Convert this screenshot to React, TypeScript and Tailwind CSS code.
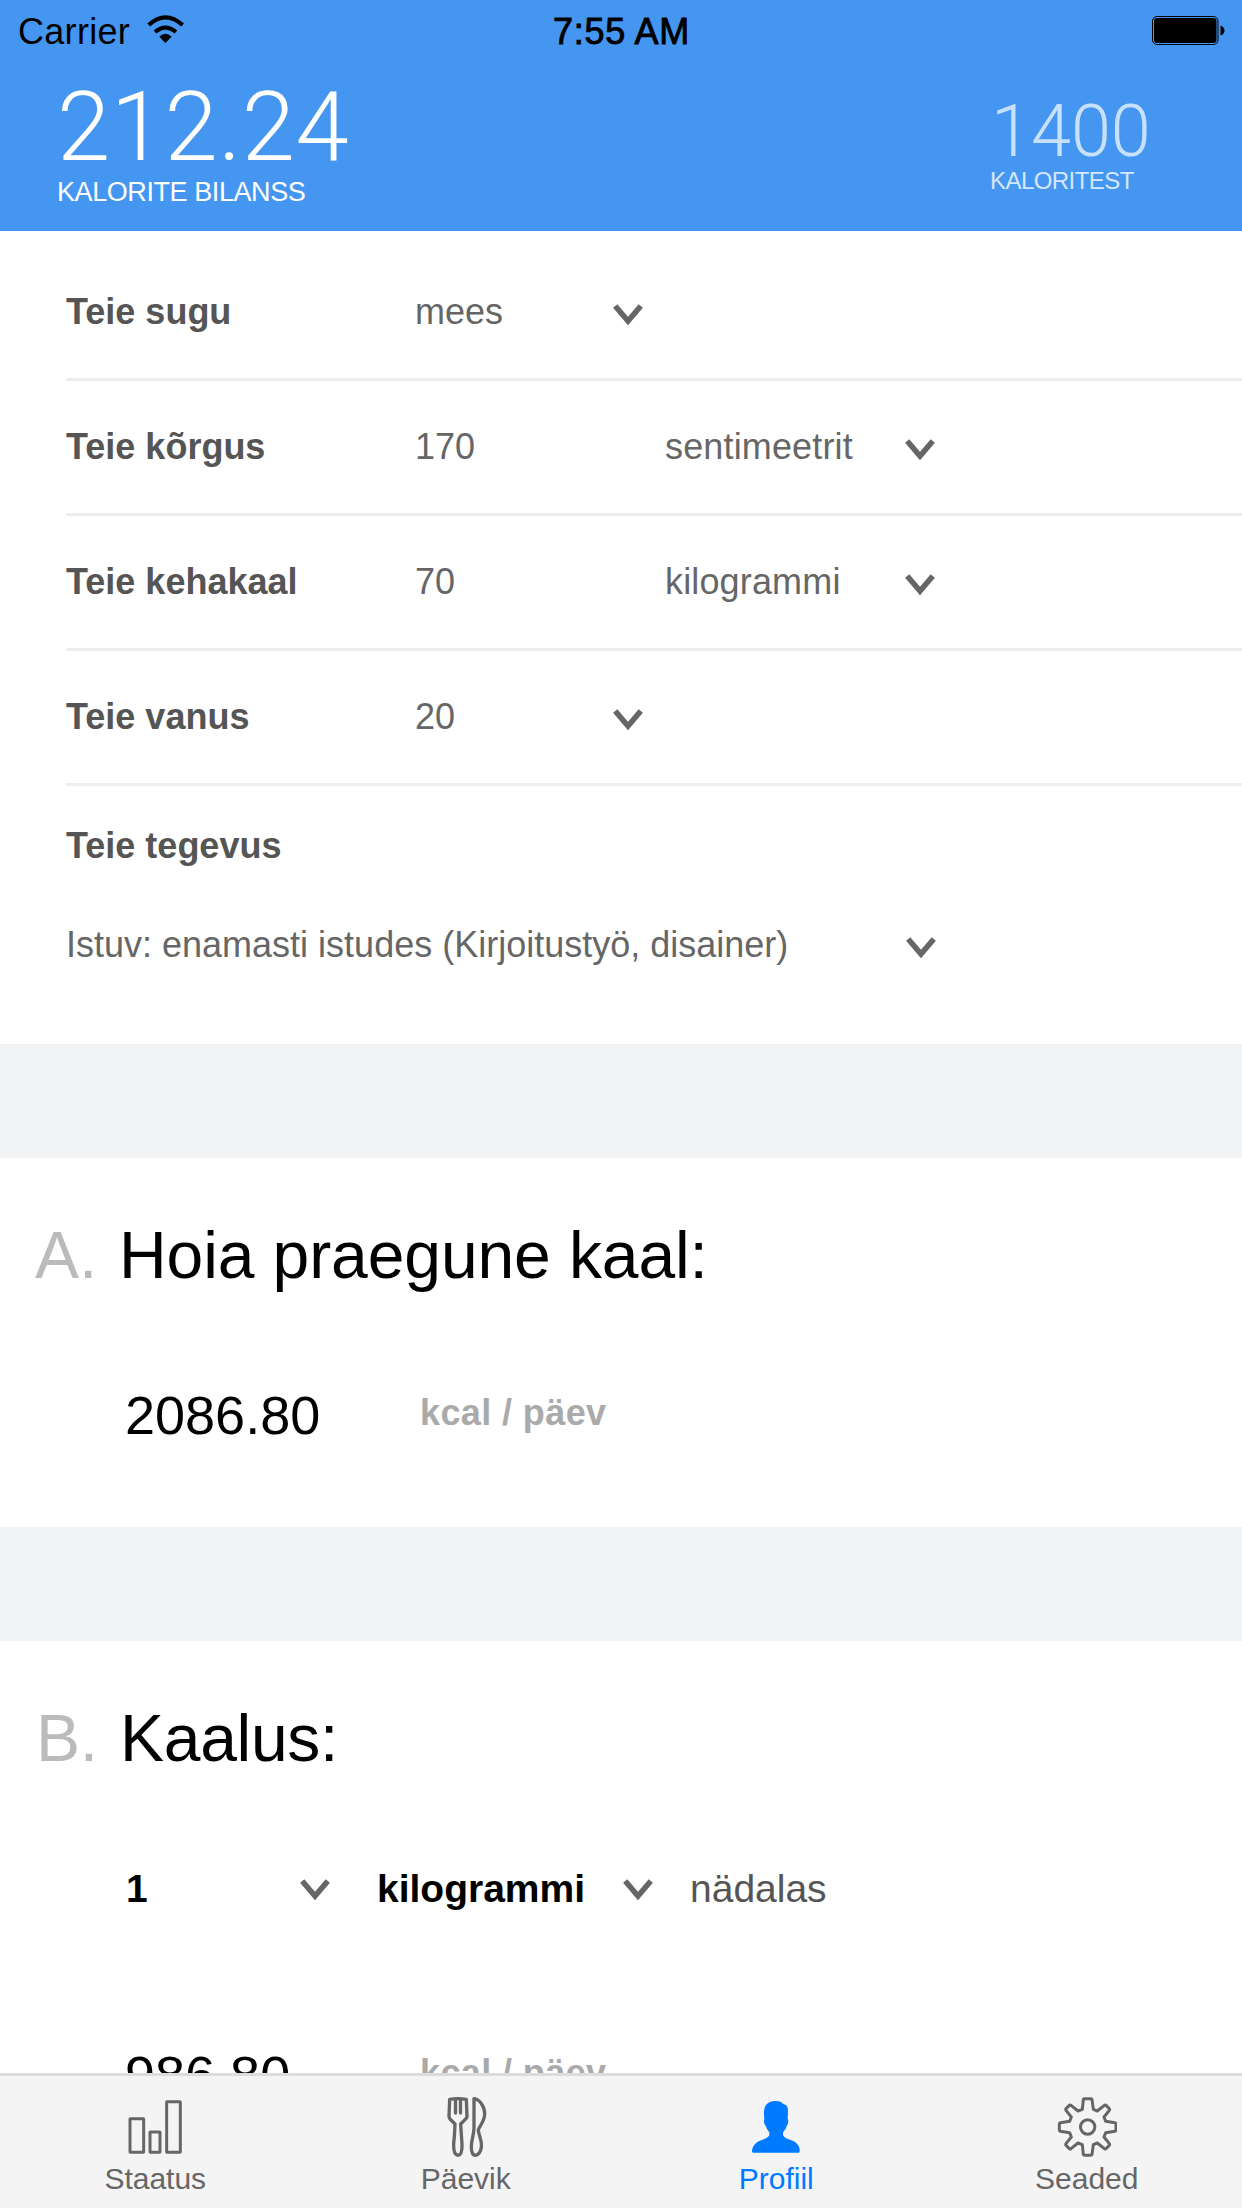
import type { ReactNode } from "react";

function Chevron({ className = "" }: { className?: string }) {
  return (
    <svg viewBox="0 0 30 21" className={`h-[21px] w-[30px] shrink-0 ${className}`} fill="none">
      <path d="M2.2 2 L15 17 L27.8 2" stroke="#666" strokeWidth="5.6" />
    </svg>
  );
}

function StatusBar() {
  return (
    <div className="grid h-[63px] grid-cols-3 items-center pl-[18px] pr-[17px] text-[36px] leading-[40px] text-black">
      <div className="flex items-center">
        <span className="tracking-[0.3px]">Carrier</span>
        <svg viewBox="441 45 114 87" className="-mt-1 ml-[17px] h-[29px] w-[38px]">
          <path d="M478 110 Q496 93 515 110 L496 129 Z" />
          <path d="M465 96 Q496 70 528 96" fill="none" stroke="#000" strokeWidth="12" />
          <path d="M446 75 Q496 29 548 75" fill="none" stroke="#000" strokeWidth="12" />
        </svg>
      </div>
      <span className="text-center tracking-[0.7px] [-webkit-text-stroke:0.9px_black]">7:55 AM</span>
      <svg viewBox="0 0 73 29" className="-mt-0.5 h-[29px] w-[73px] justify-self-end">
        <rect x="0.5" y="0.5" width="65.5" height="28" rx="4.5" fill="none" stroke="#000" />
        <rect x="2" y="2" width="62.5" height="25" rx="3" />
        <path d="M68.5 9.5 Q72.5 11 72.5 14.5 Q72.5 18 68.5 19.5 Z" />
      </svg>
    </div>
  );
}

function Header() {
  return (
    <header className="h-[231px] shrink-0 bg-[#4596f1]">
      <StatusBar />
      <div className="flex justify-between pl-[57px] text-white">
        <div className="pt-[16px]">
          <div className="font-['Roboto'] text-[96px] font-light leading-[96px] tracking-[0.5px]">212.24</div>
          <div className="mt-[2px] text-[27px] leading-[30px] tracking-[-0.42px]">KALORITE BILANSS</div>
        </div>
        <div className="w-[252px] pt-[34px]">
          <div className="pl-[1px] font-['Roboto'] text-[72px] font-light leading-[70px] text-[#c7e0fb]">1400</div>
          <div className="text-[24px] leading-[28px] tracking-[-0.55px] text-[#d5e7fc]">KALORITEST</div>
        </div>
      </div>
    </header>
  );
}

type RowProps = { label: string; value: string; unit?: string; className?: string };

function Row({ label, value, unit, className = "h-[135px]" }: RowProps) {
  return (
    <div className={`ml-[66px] flex items-center border-b-[3px] border-[#eee] ${className}`}>
      <div className="w-[349px] font-bold text-[#555]">{label}</div>
      {unit ? (
        <>
          <div className="w-[250px]">{value}</div>
          <div className="w-[240px] tracking-[0.15px]">{unit}</div>
        </>
      ) : (
        <div className="w-[198px]">{value}</div>
      )}
      <Chevron className="mt-1" />
    </div>
  );
}

function Result({ value }: { value: string }) {
  return (
    <div className="flex pl-[125px]">
      <div className="w-[295px] text-[54px] leading-[60px] text-black">{value}</div>
      <div className="mt-[8px] font-bold tracking-[0.4px] text-[#aaa]">kcal / päev</div>
    </div>
  );
}

function Heading({ mark, className, children }: { mark: string; className: string; children: ReactNode }) {
  return (
    <h2 className={`flex text-[66px] leading-[72px] text-black ${className}`}>
      <span className="w-[84px] text-[#bbb]">{mark}</span>
      <span>{children}</span>
    </h2>
  );
}

function Band() {
  return <div className="h-[114px] bg-[#f2f3f5]" />;
}

function Tab({ label, viewBox, active, children }: { label: string; viewBox: string; active?: boolean; children: ReactNode }) {
  return (
    <div className={`flex flex-1 flex-col items-center pt-[21px] ${active ? "text-[#007aff]" : "text-[#666]"}`}>
      <svg viewBox={viewBox} className="h-[60px] w-[60px]" fill="none" stroke="currentColor" strokeWidth="9" strokeLinejoin="round" strokeLinecap="round">
        {children}
      </svg>
      <span className="mt-[5px] text-[30px] leading-[34px]">{label}</span>
    </div>
  );
}

function TabBar() {
  return (
    <nav className="flex h-[135px] shrink-0 border-t-[3px] border-[#dcdcdc] bg-[#f4f4f4]">
      <Tab label="Staatus" viewBox="136 231 180 180">
        <rect x="151" y="296" width="41" height="101" rx="1" />
        <rect x="211" y="336" width="30" height="61" rx="1" />
        <rect x="261" y="245" width="41" height="152" rx="1" />
      </Tab>
      <Tab label="Päevik" viewBox="167 231 180 180">
        <g strokeWidth="10">
          <path d="M208 238 Q232 234 258 238 L260 289 Q260 293 257 296 L241 312 Q243 345 245 372 Q246 405 233 406 Q219 405 220 372 Q223 345 224 312 L209 297 Q206 294 206 289 Z" />
          <path d="M225.5 239 V279 M240.5 239 V279" />
          <path d="M281 236 V325 C280 348 273 360 273 380 Q273 406 286 406 Q300 403 303 382 C306 360 295 348 294 330 C294 322 313 306 313 281 C313 259 298 238 281 236 Z" />
        </g>
      </Tab>
      <Tab label="Profiil" viewBox="139 231 180 180" active>
        <path
          stroke="none"
          fill="currentColor"
          d="M229 243 C240 243 247 247 250 252 C257 253 262 256 264 264 C266 275 264 288 264 296 C268 300 265 314 261 318 C259 326 254 332 250 337 V346 C255 358 276 358 287 367 C297 375 301 384 300 394 Q300 398 297 398 H161 Q157 398 157 394 C157 384 162 375 172 367 C183 358 204 358 209 346 V337 C205 332 200 326 199 318 C193 314 192 302 194 296 C193 288 192 278 194 267 C197 251 211 243 229 243 Z"
        />
      </Tab>
      <Tab label="Seaded" viewBox="170 231 180 180">
        <circle cx="262" cy="321" r="21.5" />
        <path d="M249 238 Q250 236 253 236 H271 Q274 236 275 238 L279 268 L291 273 L312 256 Q315 254 318 257 L326 265 Q329 268 327 271 L311 291 L316 304 L344 308 Q347 309 347 312 V330 Q347 333 344 334 L316 338 L311 351 L327 371 Q329 374 326 377 L318 385 Q315 388 312 386 L291 369 L279 374 L275 404 Q274 406 271 406 H253 Q250 406 249 404 L246 374 L233 369 L212 386 Q209 388 206 385 L198 377 Q195 374 197 371 L213 351 L208 338 L180 334 Q177 333 177 330 V312 Q177 309 180 308 L208 304 L213 291 L197 271 Q195 268 198 265 L206 257 Q209 254 212 256 L233 273 L246 268 Z" />
      </Tab>
    </nav>
  );
}

export default function App() {
  return (
    <div className="flex h-[2208px] w-[1242px] flex-col overflow-hidden bg-white font-['Liberation_Sans',Arial,sans-serif]">
      <Header />
      <main className="min-h-0 flex-1 overflow-hidden text-[36px] leading-[40px] text-[#666]">
        <Row label="Teie sugu" value="mees" className="h-[150px] pt-[15px]" />
        <Row label="Teie kõrgus" value="170" unit="sentimeetrit" />
        <Row label="Teie kehakaal" value="70" unit="kilogrammi" />
        <Row label="Teie vanus" value="20" />
        <section className="h-[258px] pl-[66px] pt-[40px]">
          <div className="font-bold text-[#555]">Teie tegevus</div>
          <div className="mt-[59px] flex items-center">
            <div className="w-[840px]">Istuv: enamasti istudes (Kirjoitustyö, disainer)</div>
            <Chevron className="mt-1" />
          </div>
        </section>
        <Band />
        <section className="h-[369px] pt-[61px]">
          <Heading mark="A." className="pl-[35px] tracking-[-0.1px]">
            Hoia praegune kaal:
          </Heading>
          <div className="pt-[94px]">
            <Result value="2086.80" />
          </div>
        </section>
        <Band />
        <section className="pt-[61px]">
          <Heading mark="B." className="pl-[36px] tracking-[-0.3px]">
            Kaalus:
          </Heading>
          <div className="mt-[93px] flex items-center pl-[126px] text-[39px] leading-[44px]">
            <div className="w-[174px] font-bold text-black">1</div>
            <Chevron className="mt-[1px]" />
            <div className="ml-[47px] w-[246px] font-bold text-black">kilogrammi</div>
            <Chevron className="mt-[1px]" />
            <div className="ml-[37px] text-[#555]">nädalas</div>
          </div>
          <div className="pt-[134px]">
            <Result value="986.80" />
          </div>
        </section>
      </main>
      <TabBar />
    </div>
  );
}
